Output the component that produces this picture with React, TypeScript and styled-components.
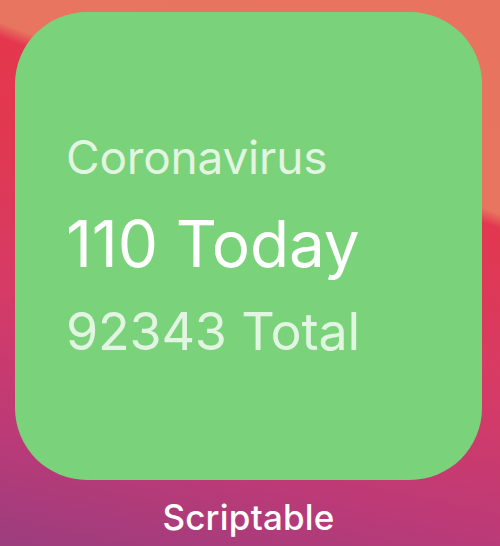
import React from 'react';
import styled, {createGlobalStyle} from 'styled-components';

const GlobalStyle = createGlobalStyle`
    html, body {
        margin: 0;
        padding: 0;
    }
    body {
        font-family: Inter, "Noto Sans", sans-serif;
    }
`;

const Screen = styled.div`
    width: 500px;
    height: 546px;
    box-sizing: border-box;
    padding: 12px 18px 0 15px;
    display: flex;
    flex-direction: column;
    align-items: center;
    overflow: hidden;
    background:
        linear-gradient(201deg, #e8745f 0%, #e8755f 29%, rgba(232, 117, 95, 0) 31%),
        linear-gradient(192deg, #e8364e 0%, #e2384f 35%, #d63b66 60%, #bc3a77 82%, #9c3d7e 100%);
`;

const Widget = styled.div`
    width: 467px;
    height: 468px;
    box-sizing: border-box;
    padding: 0 20px 0 51px;
    border-radius: 72px;
    background: #7ad37a;
    display: flex;
    flex-direction: column;
    justify-content: center;
`;

const Line = styled.div<{ $size: number; $strong?: boolean; $gap: number }>`
    font-size: ${p => p.$size}px;
    line-height: 1;
    margin-top: ${p => p.$gap}px;
    color: ${p => (p.$strong ? '#ffffff' : 'rgba(255, 255, 255, 0.78)')};
    white-space: nowrap;
    letter-spacing: -0.2px;
`;

const Label = styled.div`
    margin-top: 16px;
    font-size: 35px;
    font-weight: 500;
    color: #ffffff;
    letter-spacing: 0.2px;
`;

export default function App() {
    return (
        <>
            <GlobalStyle/>
            <Screen>
                <Widget>
                    <Line $size={46} $gap={0}>Coronavirus</Line>
                    <Line $size={64} $strong $gap={32}>110 Today</Line>
                    <Line $size={52} $gap={30}>92343 Total</Line>
                </Widget>
                <Label>Scriptable</Label>
            </Screen>
        </>
    );
}
